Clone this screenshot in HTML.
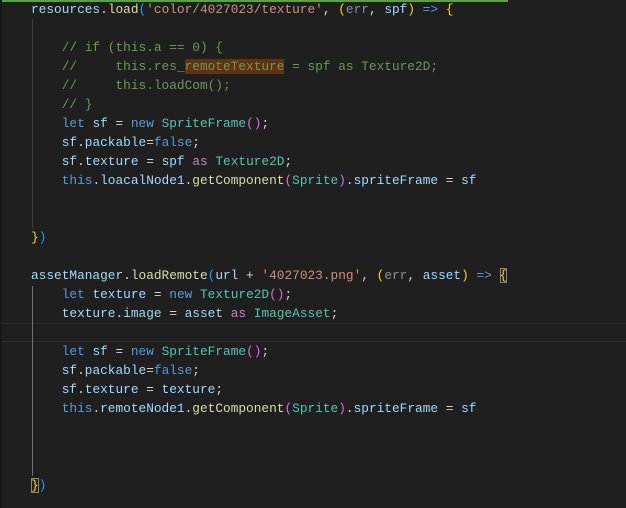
<!DOCTYPE html>
<html><head><style>
html,body{margin:0;padding:0;background:#1f1f1f;width:626px;height:508px;overflow:hidden}
.ed{position:relative;width:626px;height:508px;font-family:"Liberation Mono",monospace;font-size:12.8px;color:#d4d4d4}
.l{position:absolute;left:31px;height:19px;line-height:19px;white-space:pre}
.v{color:#9cdcfe}.f{color:#dcdcaa}.s{color:#ce9178}.c{color:#6a9955}.k{color:#569cd6}.t{color:#4ec9b0}.p{color:#c586c0}
.d{color:#7b97a8}
.g{color:#ffd700}.m{color:#da70d6}.b{color:#179fff}
.hl{background:#613214}
.bx{outline:1px solid #888;outline-offset:-1px}
.guide{position:absolute;left:32px;width:1px}
</style></head><body><div class="ed">
<div style="position:absolute;left:0;top:0;width:508px;height:2px;background:#5aa53a"></div>
<div style="position:absolute;left:0;top:0;width:2px;height:508px;background:#181818"></div>
<div style="position:absolute;left:2px;top:323px;width:624px;height:19px;border-top:1px solid #2c2c2c;border-bottom:1px solid #2c2c2c;box-sizing:border-box"></div>
<div class="guide" style="top:19px;height:209px;background:#404040"></div>
<div class="guide" style="top:286px;height:190px;background:#707070"></div>
<div class="l" style="top:0"><span class="v">resources</span>.<span class="f">load</span><span class="b">(</span><span class="s">'color/4027023/texture'</span>, <span class="g">(</span><span class="d">err</span>, <span class="v">spf</span><span class="g">)</span> <span class="k">=&gt;</span> <span class="g">{</span></div>
<div class="l c" style="top:38px">    // if (this.a == 0) {</div>
<div class="l c" style="top:57px">    //     this.res_<span class="hl">remoteTexture</span> = spf as Texture2D;</div>
<div class="l c" style="top:76px">    //     this.loadCom();</div>
<div class="l c" style="top:95px">    // }</div>
<div class="l" style="top:114px">    <span class="k">let</span> <span class="v">sf</span> = <span class="k">new</span> <span class="t">SpriteFrame</span><span class="m">()</span>;</div>
<div class="l" style="top:133px">    <span class="v">sf</span>.<span class="v">packable</span>=<span class="k">false</span>;</div>
<div class="l" style="top:152px">    <span class="v">sf</span>.<span class="v">texture</span> = <span class="v">spf</span> <span class="p">as</span> <span class="t">Texture2D</span>;</div>
<div class="l" style="top:171px">    <span class="k">this</span>.<span class="v">loacalNode1</span>.<span class="f">getComponent</span><span class="m">(</span><span class="t">Sprite</span><span class="m">)</span>.<span class="v">spriteFrame</span> = <span class="v">sf</span></div>
<div class="l" style="top:228px"><span class="g">}</span><span class="b">)</span></div>
<div class="l" style="top:266px"><span class="v">assetManager</span>.<span class="f">loadRemote</span><span class="b">(</span><span class="v">url</span> + <span class="s">'4027023.png'</span>, <span class="g">(</span><span class="d">err</span>, <span class="v">asset</span><span class="g">)</span> <span class="k">=&gt;</span> <span class="g bx">{</span></div>
<div class="l" style="top:285px">    <span class="k">let</span> <span class="v">texture</span> = <span class="k">new</span> <span class="t">Texture2D</span><span class="m">()</span>;</div>
<div class="l" style="top:304px">    <span class="v">texture</span>.<span class="v">image</span> = <span class="v">asset</span> <span class="p">as</span> <span class="t">ImageAsset</span>;</div>
<div class="l" style="top:342px">    <span class="k">let</span> <span class="v">sf</span> = <span class="k">new</span> <span class="t">SpriteFrame</span><span class="m">()</span>;</div>
<div class="l" style="top:361px">    <span class="v">sf</span>.<span class="v">packable</span>=<span class="k">false</span>;</div>
<div class="l" style="top:380px">    <span class="v">sf</span>.<span class="v">texture</span> = <span class="v">texture</span>;</div>
<div class="l" style="top:399px">    <span class="k">this</span>.<span class="v">remoteNode1</span>.<span class="f">getComponent</span><span class="m">(</span><span class="t">Sprite</span><span class="m">)</span>.<span class="v">spriteFrame</span> = <span class="v">sf</span></div>
<div class="l" style="top:476px"><span class="g bx">}</span><span class="b">)</span></div>
</div></body></html>
